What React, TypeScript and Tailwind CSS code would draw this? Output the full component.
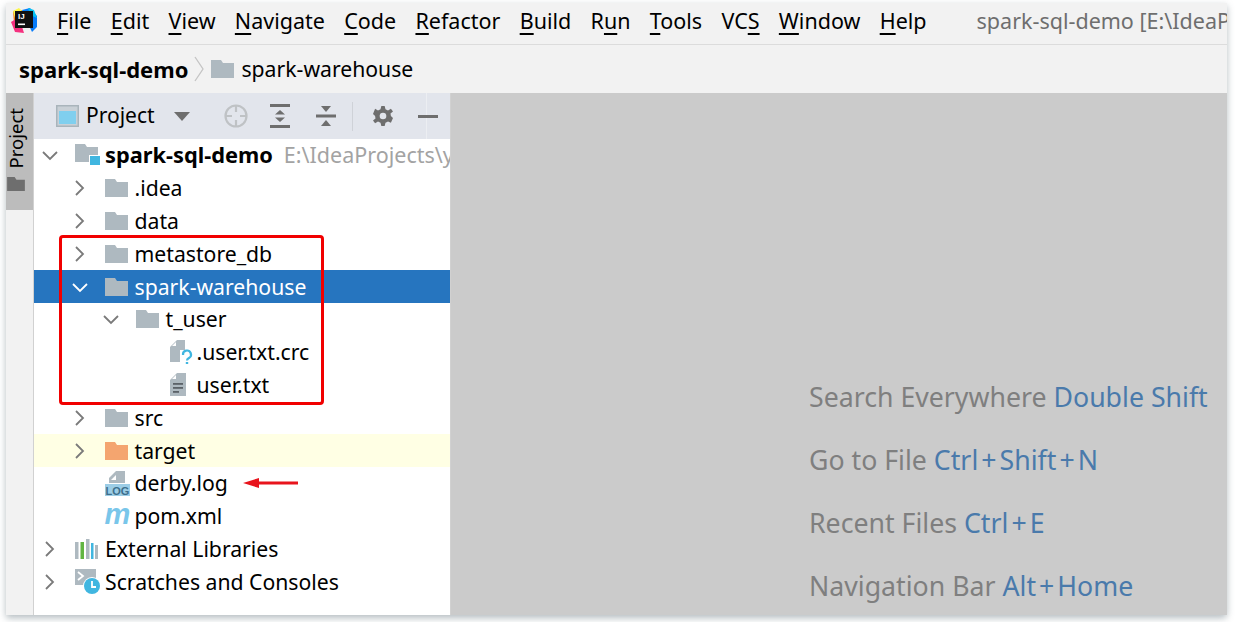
const font = "font-['Noto_Sans','Open_Sans',sans-serif]";

function Logo() {
  return (
    <svg width="28" height="28" viewBox="0 0 28 28" className="shrink-0">
      <polygon points="3,4 12,3 13,14 4,16" fill="#f97a12" />
      <polygon points="1,15 9,10 14,26 5,25 3,20" fill="#f5317f" />
      <polygon points="12,3 20,1 27,9 27,20 22,25" fill="#087cfa" />
      <polygon points="18,1 24,3 27,11 20,8" fill="#07c3f2" />
      <polygon points="3,4 9,1 13,5 5,11" fill="#fcf84a" />
      <rect x="5" y="4" width="18" height="17" fill="#111" />
      <text x="8" y="12" fontSize="8" fontWeight="700" fill="#fff" fontFamily="Liberation Sans">IJ</text>
      <rect x="8" y="16.5" width="7" height="1.6" fill="#fff" />
    </svg>
  );
}

function Folder({ color = "#aeb9c0" }: { color?: string }) {
  return (
    <svg width="23" height="18" viewBox="0 0 23 18" className="shrink-0">
      <path d="M0 0H10L12 3H23V18H0Z" fill={color} />
    </svg>
  );
}

function Chevron({ open, white }: { open?: boolean; white?: boolean }) {
  return (
    <svg width="16" height="16" viewBox="0 0 16 16" className="shrink-0">
      <polyline
        points={open ? "1,5 8,12 15,5" : "4,1 11,8 4,15"}
        fill="none"
        stroke={white ? "#ffffff" : "#7a7a7a"}
        strokeWidth="1.8"
      />
    </svg>
  );
}

function ModuleIcon() {
  return (
    <svg width="25" height="22" viewBox="0 0 25 22" className="shrink-0">
      <path d="M0 0H10L12 3H23V18H0Z" fill="#aeb9c0" />
      <rect x="14" y="11" width="11" height="11" fill="#ffffff" />
      <rect x="15" y="12" width="10" height="9" fill="#40b6e0" />
    </svg>
  );
}

function UnknownFile() {
  return (
    <svg width="24" height="24" viewBox="0 0 24 24" className="shrink-0 ml-[3px]">
      <path d="M0 7L7 0H15V22H0Z" fill="#aeb9c0" />
      <path d="M2 6L6 2V6Z" fill="#ffffff" />
      <rect x="10" y="10" width="14" height="14" fill="#ffffff" />
      <path d="M13 15a4 4 0 1 1 6 3c-1.4.8-2 1.2-2 2.6" fill="none" stroke="#40b6e0" strokeWidth="2.2" />
      <rect x="15.8" y="22" width="2.4" height="2.2" fill="#40b6e0" />
    </svg>
  );
}

function TextFile() {
  return (
    <svg width="16" height="23" viewBox="0 0 16 23" className="shrink-0 ml-[3px]">
      <path d="M0 7L7 0H16V23H0Z" fill="#aeb9c0" />
      <path d="M2 6L6 2V6Z" fill="#ffffff" />
      <rect x="3" y="10" width="10" height="1.8" fill="#5b6268" />
      <rect x="3" y="14" width="10" height="1.8" fill="#5b6268" />
      <rect x="3" y="18" width="6" height="1.8" fill="#5b6268" />
    </svg>
  );
}

function LogIcon() {
  return (
    <svg width="25" height="25" viewBox="0 0 25 25" className="shrink-0">
      <path d="M4 7L11 0H20V12H4Z" fill="#aeb9c0" />
      <path d="M6 9L11 4V9Z" fill="#ffffff" />
      <rect x="0" y="13" width="25" height="12" fill="#9ccde6" />
      <text x="12.5" y="23.5" textAnchor="middle" fontSize="11" fontWeight="700" fill="#3d6f8c" fontFamily="Liberation Sans">
        LOG
      </text>
    </svg>
  );
}

function PomIcon() {
  return (
    <span className="w-[30px] shrink-0 text-[29px] leading-[30px] -mt-[5px] font-bold italic text-[#79c6ea] font-['Liberation_Sans',sans-serif]">
      m
    </span>
  );
}

function LibrariesIcon() {
  return (
    <svg width="23" height="20" viewBox="0 0 23 20" className="shrink-0">
      <rect x="0" y="3" width="3.5" height="17" fill="#aeb9c0" />
      <rect x="5.5" y="3" width="3.5" height="17" fill="#62b543" />
      <rect x="11" y="0" width="3.5" height="20" fill="#aeb9c0" />
      <rect x="16" y="4" width="2.5" height="16" fill="#40b6e0" />
      <rect x="20" y="6" width="3" height="14" fill="#aeb9c0" />
    </svg>
  );
}

function ScratchIcon() {
  return (
    <svg width="26" height="26" viewBox="0 0 26 26" className="shrink-0">
      <rect x="0" y="0" width="21" height="16" fill="#aeb9c0" />
      <polyline points="3,3 8,7 3,11" fill="none" stroke="#ffffff" strokeWidth="1.8" />
      <circle cx="17" cy="17" r="9" fill="#ffffff" />
      <circle cx="17" cy="17" r="8" fill="#40b6e0" />
      <polyline points="17,12 17,18 21,18" fill="none" stroke="#ffffff" strokeWidth="1.8" />
    </svg>
  );
}

function Row({
  pad,
  arrow,
  icon,
  label,
  note,
  selected,
  tint,
  bold,
}: {
  pad: string;
  arrow?: "open" | "closed";
  icon: React.ReactNode;
  label: string;
  note?: string;
  selected?: boolean;
  tint?: boolean;
  bold?: boolean;
}) {
  return (
    <div
      className={`flex h-[32.8px] items-center whitespace-nowrap overflow-hidden text-[21.2px] ${pad} ${
        selected ? "bg-[#2675bf] text-white" : tint ? "bg-[#ffffe4] text-black" : "text-black"
      }`}
    >
      <div className="flex w-[33px] shrink-0 items-center">
        {arrow && <Chevron open={arrow === "open"} white={selected} />}
      </div>
      <div className="flex w-[30px] shrink-0 items-center">{icon}</div>
      <span className={bold ? "font-bold text-[21.8px]" : ""}>{label}</span>
      {note && <span className="ml-[11px] text-[21.5px] text-[#a3a3a3]">{note}</span>}
    </div>
  );
}

function Menu({ first, rest }: { first: string; rest: string }) {
  return (
    <span>
      <span className="underline underline-offset-[4px]">{first}</span>
      {rest}
    </span>
  );
}

function Hint({ label, keys }: { label: string; keys: string[] }) {
  return (
    <div className="whitespace-nowrap text-[26.7px] leading-[63px] text-[#7f7f7f]">
      {label}{" "}
      <span className="text-[#4a7aab]">
        {keys.map((k, i) => (
          <span key={k}>
            {i > 0 && <span className="px-[3px]">+</span>}
            {k}
          </span>
        ))}
      </span>
    </div>
  );
}

export default function App() {
  return (
    <div className={`h-[622px] w-[1235px] overflow-hidden bg-white pl-[6px] pt-[3px] ${font}`}>
      <div className="relative flex h-[612px] w-[1221px] flex-col rounded-br-[4px] bg-[#f2f2f2] shadow-[0_3px_7px_rgba(70,90,100,0.4)]">
        {/* menu */}
        <div className="flex h-[42px] shrink-0 items-center border-b border-[#dcdcdc] pb-[5px] pl-[4px] text-[21.5px] text-black whitespace-nowrap overflow-hidden">
          <Logo />
          <div className="ml-[19px] flex gap-[19.3px]">
            <Menu first="F" rest="ile" />
            <Menu first="E" rest="dit" />
            <Menu first="V" rest="iew" />
            <Menu first="N" rest="avigate" />
            <Menu first="C" rest="ode" />
            <Menu first="R" rest="efactor" />
            <Menu first="B" rest="uild" />
            <span>R<span className="underline underline-offset-[4px]">u</span>n</span>
            <Menu first="T" rest="ools" />
            <span>VC<span className="underline underline-offset-[4px]">S</span></span>
            <Menu first="W" rest="indow" />
            <Menu first="H" rest="elp" />
          </div>
          <span className="ml-[50px] text-[#6e6e6e]">spark-sql-demo [E:\IdeaProjects\y</span>
        </div>

        {/* breadcrumb */}
        <div className="flex h-[48px] shrink-0 items-center pl-[13px] text-[21.2px] text-black">
          <span className="font-bold text-[22px]">spark-sql-demo</span>
          <svg width="12" height="26" viewBox="0 0 12 26" className="ml-[5px] mr-[6px]">
            <polyline points="2,1 10,13 2,25" fill="none" stroke="#c4c4c4" strokeWidth="1.3" />
          </svg>
          <Folder />
          <span className="ml-[7px]">spark-warehouse</span>
        </div>

        {/* body */}
        <div className="flex min-h-0 flex-1">
          <div className="w-[28px] shrink-0 border-r border-[#d1d1d1] bg-[#f2f2f2]">
            <div className="flex h-[117px] flex-col items-center bg-[#bcbcbc] pr-[7px] pt-[15px]">
              <span className="[writing-mode:vertical-rl] rotate-180 text-[18.5px] leading-[20px] text-black">Project</span>
              <svg width="18" height="14" viewBox="0 0 19 15" className="mt-[9px]">
                <path d="M0 0H8L10 3H19V15H0Z" fill="#6e6e6e" />
              </svg>
            </div>
          </div>

          <div className="flex w-[416px] shrink-0 flex-col bg-white">
            <div className="relative flex h-[46px] shrink-0 items-center bg-[#e2e5ec] pl-[22px] text-[21px] text-black">
              <svg width="23" height="22" viewBox="0 0 23 22" className="shrink-0">
                <rect x="0.75" y="0.75" width="21.5" height="20.5" fill="#c9d0d6" stroke="#a9b4bb" strokeWidth="1.5" />
                <rect x="3" y="6" width="17" height="13" fill="#80cfee" />
              </svg>
              <span className="ml-[7px]">Project</span>
              <svg width="16" height="9" viewBox="0 0 16 9" className="ml-[19px]">
                <polygon points="0,0 16,0 8,9" fill="#6e6e6e" />
              </svg>
              <svg width="24" height="24" viewBox="0 0 24 24" className="ml-[34px]">
                <circle cx="12" cy="12" r="10.5" fill="none" stroke="#bfc2c5" strokeWidth="2.2" />
                <path d="M12 1V8M12 16V23M1 12H8M16 12H23" stroke="#bfc2c5" strokeWidth="2.2" />
              </svg>
              <svg width="20" height="24" viewBox="0 0 20 24" className="ml-[22px]">
                <rect x="0" y="0" width="20" height="3" fill="#6e6e6e" />
                <rect x="0" y="21" width="20" height="3" fill="#6e6e6e" />
                <polygon points="10,6 15,10.5 5,10.5" fill="#6e6e6e" />
                <polygon points="10,18 15,13.5 5,13.5" fill="#6e6e6e" />
              </svg>
              <svg width="20" height="24" viewBox="0 0 20 24" className="ml-[26px]">
                <rect x="0" y="10.5" width="20" height="3" fill="#6e6e6e" />
                <polygon points="10,8 15,2 5,2" fill="#6e6e6e" />
                <polygon points="10,16 15,22 5,22" fill="#6e6e6e" />
              </svg>
              <div className="ml-[16px] h-[29px] w-px bg-[#cfd2d8]" />
              <svg width="20" height="20" viewBox="0 0 24 24" className="ml-[20px]">
                <path
                  d="M10 0H14L15 4L18 5.3L21.5 3.2L24 6.5L21 9L21.5 12L24 14.5L21.5 20L18 18.7L15 20L14 24H10L9 20L6 18.7L2.5 20.8L0 17.5L3 15L2.5 12L0 9.5L2.5 3.2L6 5.3L9 4Z"
                  fill="#6e6e6e"
                />
                <circle cx="12" cy="12" r="4" fill="#e2e5ec" />
              </svg>
              <div className="absolute right-[23px] top-0 h-full w-px bg-[#eceef2]" />
              <div className="relative ml-[25px] h-[3px] w-[20px] bg-[#6e6e6e]" />
            </div>

            <div className="flex flex-col">
              <Row pad="pl-[8px]" arrow="open" icon={<ModuleIcon />} label="spark-sql-demo" note="E:\IdeaProjects\y" bold />
              <Row pad="pl-[37.5px]" arrow="closed" icon={<Folder />} label=".idea" />
              <Row pad="pl-[37.5px]" arrow="closed" icon={<Folder />} label="data" />
              <Row pad="pl-[37.5px]" arrow="closed" icon={<Folder />} label="metastore_db" />
              <Row pad="pl-[37.5px]" arrow="open" icon={<Folder />} label="spark-warehouse" selected />
              <Row pad="pl-[68.5px]" arrow="open" icon={<Folder />} label="t_user" />
              <Row pad="pl-[99.5px]" icon={<UnknownFile />} label=".user.txt.crc" />
              <Row pad="pl-[99.5px]" icon={<TextFile />} label="user.txt" />
              <Row pad="pl-[37.5px]" arrow="closed" icon={<Folder />} label="src" />
              <Row pad="pl-[37.5px]" arrow="closed" icon={<Folder color="#f4a56f" />} label="target" tint />
              <Row pad="pl-[37.5px]" icon={<LogIcon />} label="derby.log" />
              <Row pad="pl-[37.5px]" icon={<PomIcon />} label="pom.xml" />
              <Row pad="pl-[8px]" arrow="closed" icon={<LibrariesIcon />} label="External Libraries" />
              <Row pad="pl-[8px]" arrow="closed" icon={<ScratchIcon />} label="Scratches and Consoles" />
            </div>
          </div>

          <div className="flex min-w-0 flex-1 flex-col overflow-hidden border-l border-[#d1d1d1] bg-[#cbcbcb] pl-[358px] pt-[272px]">
            <Hint label="Search Everywhere" keys={["Double Shift"]} />
            <Hint label="Go to File" keys={["Ctrl", "Shift", "N"]} />
            <Hint label="Recent Files" keys={["Ctrl", "E"]} />
            <Hint label="Navigation Bar" keys={["Alt", "Home"]} />
          </div>
        </div>

        {/* annotations drawn over the tree */}
        <div className="absolute left-[53px] top-[232px] h-[170px] w-[265px] rounded-[4px] border-[3px] border-[#f10000]" />
        <svg width="55" height="14" viewBox="0 0 55 14" className="absolute left-[237px] top-[473px]">
          <path d="M55 5.5H16V2L0 7L16 12V8.5H55Z" fill="#e8141c" />
        </svg>
      </div>
    </div>
  );
}
